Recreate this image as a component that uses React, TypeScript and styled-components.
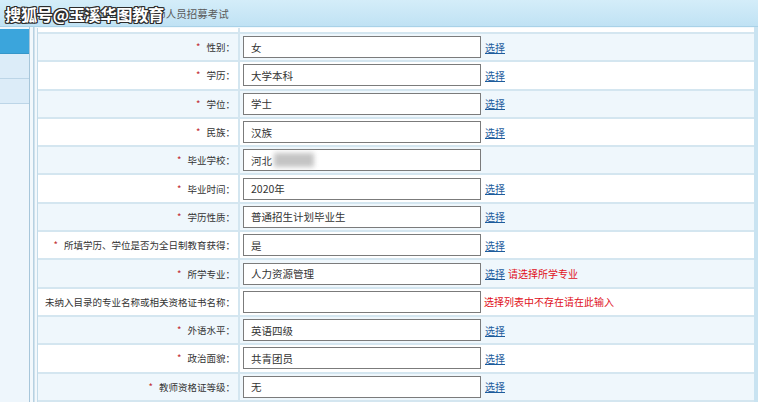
import styled, { createGlobalStyle } from "styled-components";

const GlobalStyle = createGlobalStyle`
  html, body {
    margin: 0;
    padding: 0;
    background: #ffffff;
  }
  body {
    font-family: "Noto Sans CJK SC", "Noto Sans", sans-serif;
    font-size: 10px;
    color: #333;
  }
`;

const Page = styled.div`
  width: 758px;
  height: 402px;
  overflow: hidden;
  display: flex;
  flex-direction: column;
`;

const Header = styled.div`
  position: relative;
  flex: 0 0 26px;
  display: flex;
  align-items: center;
  padding-left: 6px;
  background: linear-gradient(#d4edf9, #c0e2f4);
  border-bottom: 1px solid #a9d2e8;
  color: #5a5a5a;
  font-size: 10.5px;
`;

const Watermark = styled.div`
  position: absolute;
  left: 5px;
  top: 2px;
  font-size: 16.2px;
  font-weight: 700;
  letter-spacing: -0.3px;
  color: #ffffff;
  text-shadow: 1px 0 0 #2b2b2b, -1px 0 0 #2b2b2b, 0 1px 0 #2b2b2b,
    0 -1px 0 #2b2b2b, 1px 1px 0 #2b2b2b, -1px -1px 0 #2b2b2b,
    1px -1px 0 #2b2b2b, -1px 1px 0 #2b2b2b;
`;

const Body = styled.div`
  flex: 1;
  display: flex;
  min-height: 0;
`;

const Sidebar = styled.div`
  width: 29px;
  padding-top: 2px;
  background: #eef6fc;
  border-right: 1px solid #a7c6da;
  display: flex;
  flex-direction: column;
`;

const NavItem = styled.div<{ $active?: boolean }>`
  height: 24px;
  background: ${(p) => (p.$active ? "#3ba5dc" : "#dcecf8")};
  border-bottom: 1px solid ${(p) => (p.$active ? "#3596c9" : "#bcd5e7")};
`;

const Gutter = styled.div`
  width: 3px;
  background: #f2f8fc;
  border-right: 1px solid #b7d1e1;
`;

const Main = styled.div`
  flex: 1;
  display: flex;
  padding-left: 2px;
  background: #f2f8fc;
  border-left: 1px solid #d0e2ed;
`;

const Table = styled.div`
  flex: 1;
  display: grid;
  grid-template-columns: 200px 1fr;
  grid-auto-rows: 26.3px;
  grid-template-rows: 4px;
  row-gap: 2px;
  column-gap: 2px;
  align-content: start;
  margin-top: 1px;
  background: #d4e6f0;
  border-left: 1px solid #c3dbe9;
`;

const Cell = styled.div<{ $light: boolean }>`
  display: flex;
  align-items: center;
  background: ${(p) => (p.$light ? "#eff7fc" : "#ffffff")};
`;

const LabelCell = styled(Cell)`
  justify-content: flex-end;
  padding-right: 3px;
  white-space: nowrap;
  font-size: 9.5px;
`;

const ValueCell = styled(Cell)`
  padding-left: 3px;
  gap: 4px;
`;

const Star = styled.span`
  color: #c0282d;
  margin-right: 6px;
`;

const Field = styled.div`
  box-sizing: border-box;
  width: 238px;
  height: 22px;
  border: 1px solid #7b7b7b;
  background: #ffffff;
  display: flex;
  align-items: center;
  padding-left: 7px;
  font-size: 10.5px;
  color: #333;
`;

const Smudge = styled.span`
  display: inline-block;
  width: 40px;
  height: 14px;
  margin-left: 2px;
  background: #c4c4c4;
  filter: blur(2.5px);
`;

const Pick = styled.a`
  color: #1d5c9c;
  text-decoration: underline;
  cursor: pointer;
`;

const Hint = styled.span`
  color: #e0101a;
  margin-left: -1px;
`;

const Strip = styled.div`
  width: 4px;
  background: #c9e3f1;
`;

interface IRow {
  label: string;
  value: string;
  req?: boolean;
  pick?: boolean;
  hint?: string;
  blur?: boolean;
}

const rows: IRow[] = [
  { label: "性别", value: "女", req: true, pick: true },
  { label: "学历", value: "大学本科", req: true, pick: true },
  { label: "学位", value: "学士", req: true, pick: true },
  { label: "民族", value: "汉族", req: true, pick: true },
  { label: "毕业学校", value: "河北", req: true, blur: true },
  { label: "毕业时间", value: "2020年", req: true, pick: true },
  { label: "学历性质", value: "普通招生计划毕业生", req: true, pick: true },
  { label: "所填学历、学位是否为全日制教育获得", value: "是", req: true, pick: true },
  { label: "所学专业", value: "人力资源管理", req: true, pick: true, hint: "请选择所学专业" },
  { label: "未纳入目录的专业名称或相关资格证书名称", value: "", hint: "选择列表中不存在请在此输入" },
  { label: "外语水平", value: "英语四级", req: true, pick: true },
  { label: "政治面貌", value: "共青团员", req: true, pick: true },
  { label: "教师资格证等级", value: "无", req: true, pick: true },
  { label: "", value: "" },
];

function App() {
  return (
    <Page>
      <GlobalStyle />
      <Header>
        当前位置：2020年河北省特岗教师人员招募考试
        <Watermark>搜狐号@玉溪华图教育</Watermark>
      </Header>
      <Body>
        <Sidebar>
          <NavItem $active />
          <NavItem />
          <NavItem />
        </Sidebar>
        <Gutter />
        <Main>
          <Table>
            <Cell $light={false} />
            <Cell $light={false} />
            {rows.map((row, i) => {
              const light = i % 2 === 0;
              return [
                <LabelCell key={"l" + i} $light={light}>
                  {row.req && <Star>*</Star>}
                  {row.label && row.label + "："}
                </LabelCell>,
                <ValueCell key={"v" + i} $light={light}>
                  {row.label && (
                    <Field>
                      {row.value}
                      {row.blur && <Smudge />}
                    </Field>
                  )}
                  {row.pick && <Pick>选择</Pick>}
                  {row.hint && <Hint>{row.hint}</Hint>}
                </ValueCell>,
              ];
            })}
          </Table>
          <Strip />
        </Main>
      </Body>
    </Page>
  );
}

export default App;
